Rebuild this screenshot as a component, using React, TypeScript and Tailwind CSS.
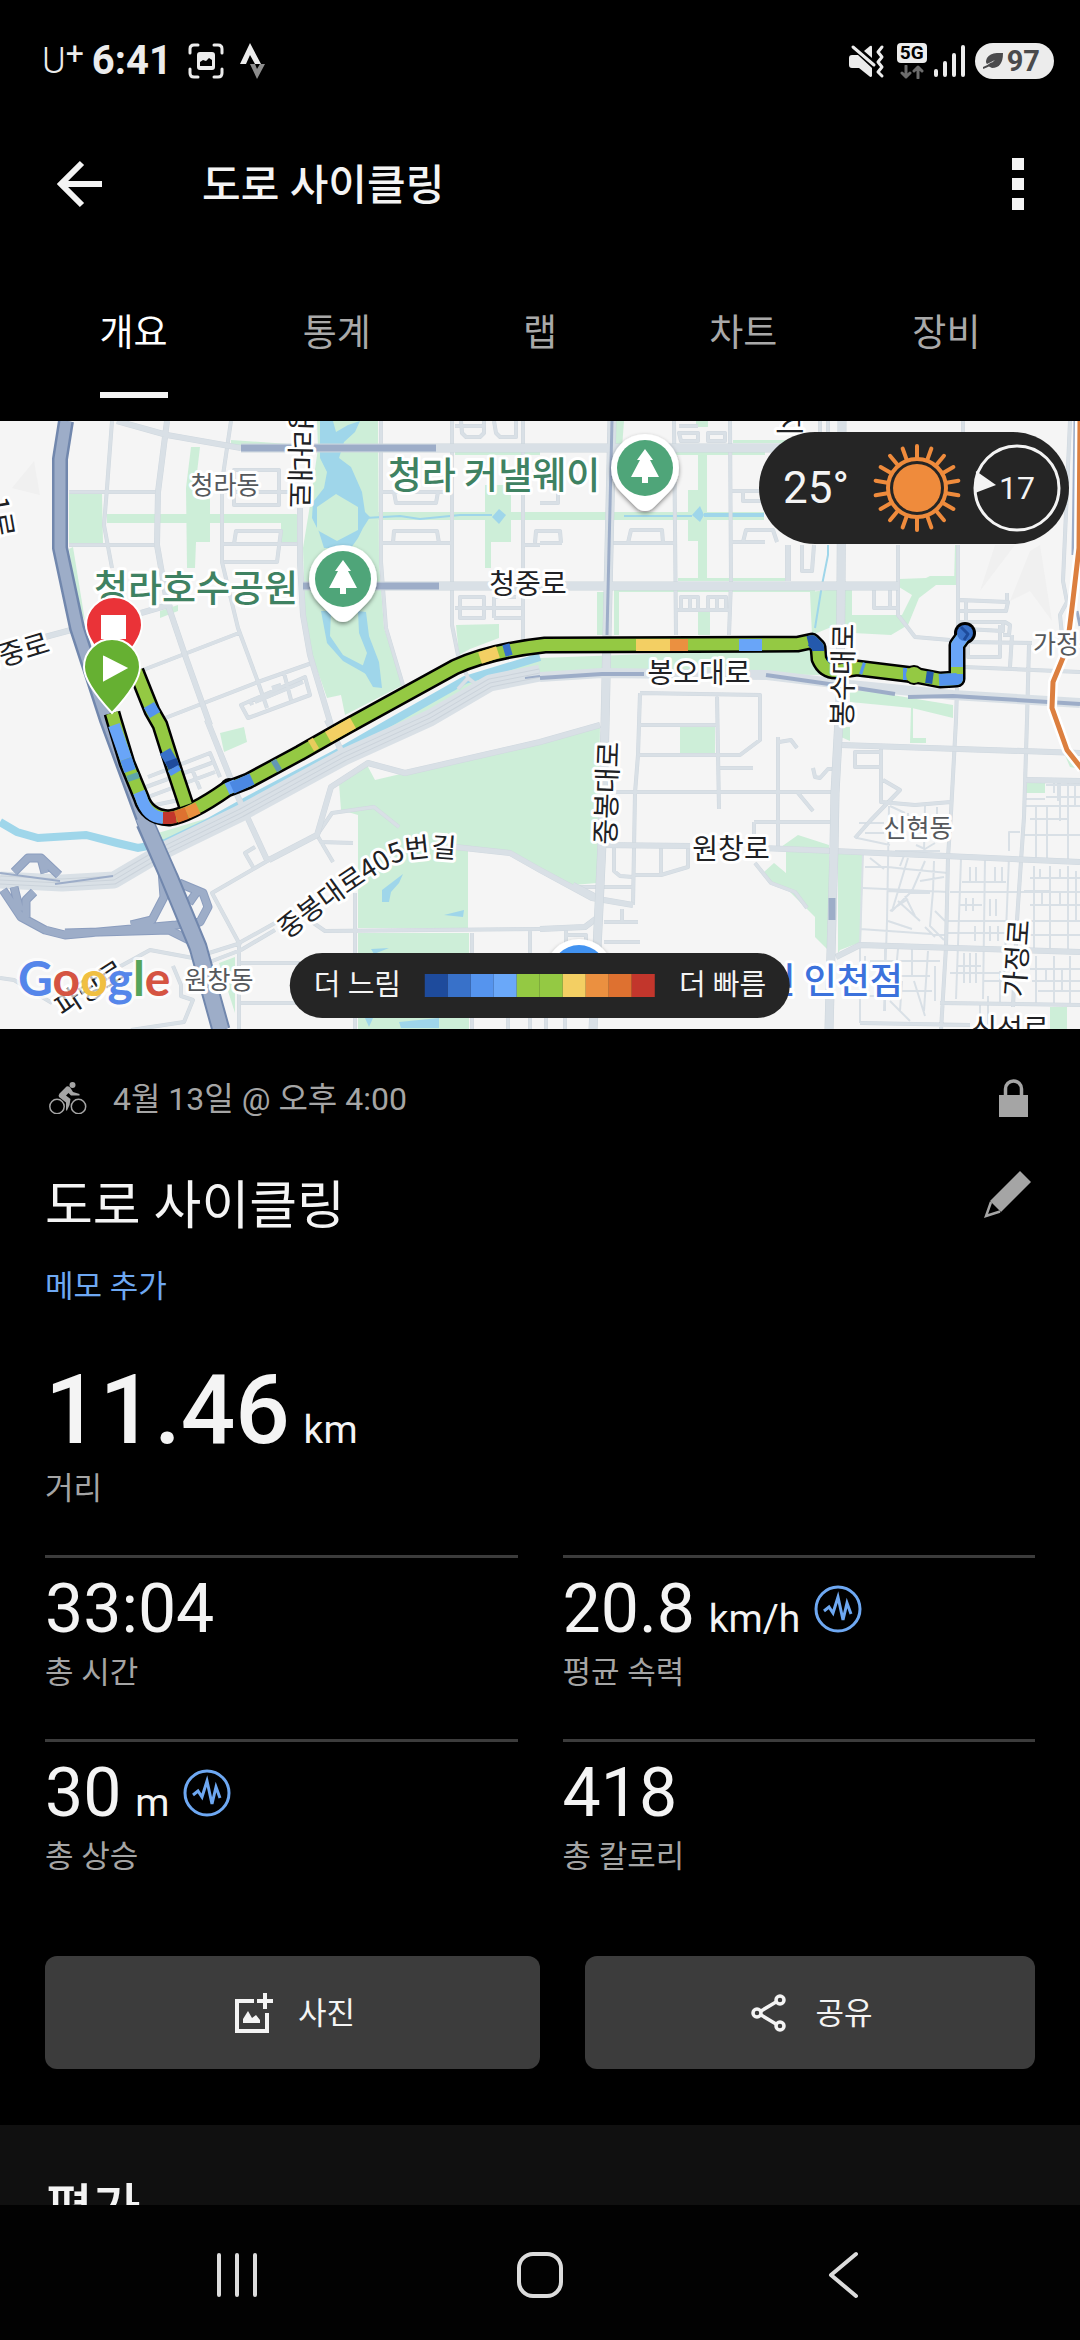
import { useState } from "react";
import type { ReactNode } from "react";

const TABS = ["개요", "통계", "랩", "차트", "장비"];

const LEGEND_COLORS = [
  "bg-[#1e4b9c]",
  "bg-[#3871c9]",
  "bg-[#5594ee]",
  "bg-[#6aa8f9]",
  "bg-[#94c943]",
  "bg-[#94c943]",
  "bg-[#f3cf63]",
  "bg-[#eb9040]",
  "bg-[#de7130]",
  "bg-[#c2362c]",
];

interface StatProps {
  value: string;
  unit?: string;
  label: string;
  hasChart?: boolean;
}

const STATS: StatProps[] = [
  { value: "33:04", label: "총 시간" },
  { value: "20.8", unit: "km/h", label: "평균 속력", hasChart: true },
  { value: "30", unit: "m", label: "총 상승", hasChart: true },
  { value: "418", label: "총 칼로리" },
];

const PARKS = [
  "317,0 378,0 379,141 384,207 403,264 345,294 341,274 327,277 312,234 305,194 303,127 310,84 318,27",
  "191,26 200,26 196,60 210,76 210,121 196,121 195,147 187,147 186,67",
  "107,93 296,93 303,96 303,121 281,121 281,102 107,102",
  "69,72 102,72 103,122 69,122",
  "69,128 73,126 85,200 78,186",
  "370,91 540,91 764,91 764,99 540,99 370,99",
  "485,64 511,64 511,121 491,121 491,147 485,147",
  "698,31 707,31 707,157 698,157 698,120 688,120 688,69 698,69",
  "231,19 288,23 288,26 231,24",
  "455,31 540,31 540,34 455,34",
  "462,261 517,241 540,237 815,227 826,254 540,252 510,259 430,299 241,396 162,429 158,412 248,385",
  "339,362 367,344 375,359 600,306 597,462 573,464 510,431 468,426 468,507 358,507 358,394 341,389",
  "358,512 469,512 469,609 358,609",
  "456,204 499,203 499,217 470,228 459,234",
  "220,312 244,306 247,321 224,331",
  "781,426 798,414 829,424 829,496 815,496 788,469 769,461 764,451 774,442 786,452 786,431",
  "838,432 863,433 861,521 840,529 838,532",
  "815,496 829,496 828,529 815,516",
  "680,306 715,306 715,332 680,332",
  "810,171 852,166 852,194 902,194 912,174 899,166 899,158 926,157 930,155 955,155 955,164 936,164 919,177 908,204 891,214 853,212 829,207 812,214",
  "850,267 953,284 953,297 912,287 850,281",
  "597,171 605,171 605,214 597,214",
  "614,168 815,168 815,171 619,171 619,214 614,214",
  "698,191 710,191 710,214 698,214",
  "616,0 624,0 622,27 616,27",
  "678,157 788,157 788,160 678,160",
  "733,19 795,19 795,22 733,22",
  "614,31 765,31 765,34 614,34",
  "696,0 708,0 708,6 696,6",
  "786,124 789,124 788,157 785,157",
  "955,124 958,124 957,164 954,164",
  "911,287 913,287 913,317 926,317 926,322 910,322",
  "841,306 850,306 850,320 841,316",
  "1050,586 1067,586 1067,608 1050,608",
  "1026,361 1045,361 1045,372 1026,372",
  "1064,332 1072,334 1080,344 1080,348 1070,346",
  "219,542 235,536 235,592",
  "160,190 178,184 178,190 160,197",
  "178,205 186,236 182,232 174,200",
];

const WATER = [
  "320,0 333,0 336,11 348,4 360,0 355,11 344,21 339,37 351,46 362,71 365,91 370,96 363,107 358,117 351,127 324,127 319,111 312,97 313,81 324,67 327,51 320,37",
  "358,190 366,191 369,215 379,241 382,267 373,266 362,247 367,232 359,212",
  "321,190 331,190 330,215 343,234 366,246 366,253 343,240 327,222",
  "492,96 499,88 506,94 499,103",
  "692,94 700,85 704,94 700,101",
  "382,469 403,453 399,462 391,471 389,481 382,481",
  "444,494 464,489 463,496",
  "399,601 439,597 439,607 401,607",
  "371,528 389,527 374,533",
  "365,597 373,597 369,606",
];

const LARGE_ROADS =
  "M241 27H795M303 165H898M612 0L607 214L605 304L602 422L599 486L593 609M842 0L841 167L840 280L835 372L834 427L831 532L829 609";

const MEDIUM_ROADS = [
  "M117 0L167 14L241 27M167 0L158 71L157 124L167 181L186 237L210 304M207 299L238 376L267 439M300 87V141L303 194L310 234L331 304",
  "M45 216L71 209M141 192L172 183M327 299L344 336M269 439L317 414L331 366L368 342L405 352L540 321L600 304",
  "M455 426L510 432L540 449L592 477L633 484M573 464L600 478M600 424L690 425M760 427L834 430L1080 441",
  "M841 324L1080 332M836 536L860 524L1080 531M540 508L585 506L597 497M788 124V160M1026 359L1080 360",
].join("");

const SMALL_ROADS = [
  "M381 0V141L386 207L403 264M452 0V204L458 234L468 257L458 268M468 257L482 268M523 0V222",
  "M112 0L107 67L104 104L112 147M231 0L222 61V141L238 207L258 261L267 287",
  "M69 71H158M69 124H158M222 123H300M222 71H288M234 49H279V84H234ZM234 123L236 110H281L277 141H224",
  "M381 122H452M393 122L394 110H437L439 122M381 71H452M394 71L396 82H436L438 71M523 124H540M535 122L536 110H560L561 122",
  "M461 0L462 12L466 16H480L484 12V0M494 0L496 12L500 16H516V0M455 5H484",
  "M460 176H484V197H460ZM494 176H516M494 197H523M494 176V197M455 187H523",
  "M143 249L239 212M160 299L258 261L312 242M241 284L305 256L310 274L248 297ZM284 252L291 279M255 281L303 261M250 278L252 284M272 267L281 264",
  "M148 356L210 332L220 356M146 366L214 341M148 376L215 351M155 384L179 379M192 348L200 368",
  "M269 439L212 472L239 522V609M317 414L332 392L374 386L399 406M317 414L333 441M320 421L353 422M355 472V609",
  "M312 501L325 510L540 508M239 522L275 502M207 542L241 529L275 509M0 557L14 559L52 582M90 562L150 529L193 537L241 522M131 609L184 601L193 579L181 575V564L173 545",
  "M241 542H300M241 582H300M472 512V609M530 510V609M508 590V609M546 590V609M565 590V609M255 426L245 432L253 446",
  "M674 0L676 214M730 0L731 160L729 214M679 5H698M679 12H698V20H681ZM708 12H725V20H708Z",
  "M540 122H562M609 122H674M628 122L631 109H662L663 122M730 121H765M743 121L746 109H773L777 121M743 70V80H765M730 70H765M540 82H558V70",
  "M681 176H698V189H681ZM690 176V189M708 176H726V189H708ZM717 176V189M676 189H730M802 124V150H812L814 124",
  "M820 0V12M828 0V12M963 0V12M898 124V194L915 216L950 219M958 124V214M874 166H890V187H874ZM874 187H898",
  "M964 221L1032 222M963 246L1080 251M1029 224L1027 299L1024 396L1017 499L1013 586M957 267L956 299L951 392L948 436L946 526L941 609",
  "M960 179L1008 181L1006 190H960M960 201H1005L1010 204L1009 214H1003M966 180V208L1003 210V201M1007 179V172M968 222V236H1000V204M1012 214L1010 246",
  "M1070 0L1063 160L1067 181L1060 194L1062 214M640 272L760 274V319L740 334H638M640 272L638 334L635 372L633 484M717 274L719 388M638 304H717",
  "M616 371H833M574 466H633M604 501H638M604 521H640M622 488V500M778 316V427M778 401H833M754 401V424M754 401H778M614 424V450L620 455L633 456M661 424V454M688 424V446L661 454H633M720 347H753M779 321L791 319L797 327",
  "M755 442L771 462L795 471L807 487M798 372L813 390M813 347L815 356L820 357L828 348L833 348M855 331H881V346H855ZM881 324V381L915 384L951 381M883 359L900 369L870 400L855 417",
  "M860 602L970 604M940 582L1080 584M566 508V524M566 514H586V520",
].join("");

// Residential grid in the south-east corner
const STREETS = [
  "M863 433L860 524V602M889 385L887 500L884 590M908 392V400M925 385L924 430M934 440L933 470L930 505L944 519M937 386V400",
  "M859 402H884M857 417L890 424M865 446H888L906 448L948 452M863 467L948 471M860 508L946 514M865 412H884M908 437L892 490L912 470L925 440",
  "M888 470L930 472M888 500L912 508M898 480L920 500M905 475L915 495M890 490L908 478M920 460L944 456M870 437L884 448M905 432L900 445M935 490L945 500M925 506L935 516",
  "M961 438L958 524L956 578M985 438L983 578M1009 436L1004 560M970 446V462M976 446V462M995 446V462M1002 446V462M962 461H1006M950 471H1080",
  "M960 484H982M966 477V490M973 477V490M948 500H1006M990 478V495M996 478V495M975 505V520M948 512H1016M990 505V520M998 505V520",
  "M957 545H981M964 532V562M970 532V562M976 532V562M950 552H1010M984 560H1010M988 575V604M1000 550V584M980 584V604",
  "M1036 385V440M1058 362V380M1025 385H1080M1030 398H1068M1047 385V440M1060 362V400M1068 362V440M1075 362V384M1046 376H1080M1024 414H1080M1026 378H1045",
  "M1034 445V530M1050 445V530M1068 445V530M1030 457H1080M1030 484H1080M1030 500H1080M1022 514H1080M1040 448V457M1060 448V457M1042 470V484M1060 470V484M1076 450V500M1024 470H1050",
  "M1036 535V584M1054 535V584M1070 535V584M1030 548H1080M1032 560H1080M1038 570H1080M1046 548V560M1062 548V570M1054 362V372M1046 364H1080",
  "M885 528V590M898 528L895 560M912 528V556M928 530L924 590M870 540H940M888 555H930M886 570H932M890 580L910 600M902 560L900 590M914 560L925 595M935 545V580M865 535V552M880 560H870M866 575H884",
  "M1009 430V411H1020M890 385L905 392M895 430H940M916 424L925 428L935 422",
].join("");

const RAMPS =
  "M14 451L28 437H41L59 454M41 437L45 452M3 469L21 496L45 509L65 514L176 504L200 501L208 486L203 472L179 462M14 466L20 490M34 471L26 479V496M162 449L164 476L152 499L131 504M65 512L169 509L193 521M196 472L189 482";

const MOTORWAY = "M66 0L60 38V127L77 207L107 299L145 402L169 456L198 526L221 609";
const TROLLEY =
  "M540 252L490 262L430 297L344 336L241 392L165 429L114 459L62 462L0 459";
const SUBWAY =
  "M1080 0L1079 127L1072 187L1067 227L1053 261L1052 287L1067 329L1082 348";

const ROUTE =
  "M112 292L114 299L127 342L141 376Q147 396 169 397Q190 394 227 368L248 360L300 332L344 307L455 246Q490 230 545 224L798 223L812 220L818 226L819 238Q824 250 836 250L857 247L914 254L940 259L957 258V224L965 213";
const ROUTE_RETURN = "M136 250L152 290L160 304L172 342L186 384";

const SEGMENTS = [
  { color: "#94c943", d: ROUTE_RETURN },
  { color: "#94c943", d: ROUTE },
  { color: "#69a5f8", d: "M114 304L126 338" },
  { color: "#5594ee", d: "M126 338L130 350" },
  { color: "#5fa5a8", d: "M132 353L134 359" },
  { color: "#69a5f8", d: "M139 371L141 376Q147 396 163 397" },
  { color: "#c2362c", d: "M163 397H169L176 396" },
  { color: "#de7130", d: "M176 396L187 392" },
  { color: "#eb9040", d: "M187 392L198 387" },
  { color: "#5594ee", d: "M149 284L155 294" },
  { color: "#3871c9", d: "M165 330L172 342" },
  { color: "#1e4b9c", d: "M171 339L174 347" },
  { color: "#5594ee", d: "M173 347L176 352" },
  { color: "#69a5f8", d: "M227 368L236 364" },
  { color: "#4b88e2", d: "M232 367L252 358" },
  { color: "#6397b4", d: "M274 346L279 343" },
  { color: "#e8cc5c", d: "M311 325L316 322" },
  { color: "#f3cf63", d: "M328 316L353 302" },
  { color: "#f3cf63", d: "M480 237L498 231" },
  { color: "#3871c9", d: "M504 230L511 228" },
  { color: "#f3cf63", d: "M636 224H670" },
  { color: "#eb9040", d: "M670 224H688" },
  { color: "#69a5f8", d: "M739 224H762" },
  { color: "#2459ad", d: "M808 221L812 220L818 226V230" },
  { color: "#5594ee", d: "M861 247L864 248" },
  { color: "#5594ee", d: "M903 253L907 253" },
  { color: "#2459ad", d: "M926 256L933 257" },
  { color: "#5594ee", d: "M939 259L957 258V253" },
  { color: "#69a5f8", d: "M957 246V224L965 213" },
];

interface MapLabelProps {
  x: number;
  y: number;
  size?: number;
  fill?: string;
  weight?: number;
  rotate?: number;
  anchor?: "start" | "middle" | "end";
  children: ReactNode;
}

function MapLabel({
  x,
  y,
  size = 28,
  fill = "#202124",
  weight = 400,
  rotate = 0,
  anchor = "middle",
  children,
}: MapLabelProps) {
  return (
    <text
      transform={`translate(${x} ${y}) rotate(${rotate})`}
      fontSize={size}
      fontWeight={weight}
      fill={fill}
      stroke="#fff"
      strokeWidth={6}
      strokeLinejoin="round"
      paintOrder="stroke"
      textAnchor={anchor}
      dominantBaseline="central"
    >
      {children}
    </text>
  );
}

function ParkPin({ x, y }: { x: number; y: number }) {
  return (
    <g transform={`translate(${x} ${y})`}>
      <path
        d="M0 43Q-5 43 -9 39L-24 24A34 34 0 1 1 24 24L9 39Q5 43 0 43Z"
        fill="#fff"
        filter="url(#pin-shadow)"
      />
      <circle r="28" fill="#4fa579" />
      <path d="M0-19L8-8H5L14 9H3V15H-3V9H-14L-5-8H-8Z" fill="#fff" />
    </g>
  );
}

function RouteMap() {
  return (
    <svg
      viewBox="0 0 1080 608"
      className="block h-auto w-full bg-[#f5f5f5] font-['Noto_Sans_CJK_KR',sans-serif]"
      role="img"
      aria-label="경로 지도"
    >
      <defs>
        <filter id="pin-shadow" x="-30%" y="-30%" width="160%" height="160%">
          <feDropShadow dx="0" dy="2" stdDeviation="2" floodOpacity="0.45" />
        </filter>
        <path id="curved-road" d="M287 519Q350 468 398 441Q425 431 470 440" />
      </defs>

      <path
        d="M34 40L12 67L40 74ZM1040 124L1052 200L1030 170L1010 180L1030 130ZM995 124L980 170L1015 124Z"
        fill="#f0f0f0"
      />
      <g fill="#cdeed8">
        {PARKS.map((points) => (
          <polygon key={points} points={points} />
        ))}
      </g>
      <g fill="#9fd6ea">
        {WATER.map((points) => (
          <polygon key={points} points={points} />
        ))}
      </g>
      <polygon
        points="336,73 358,86 358,109 337,120 317,109 317,86"
        fill="#cdeed8"
      />
      <g fill="none" stroke="#9fd6ea">
        <path d="M365 97L400 95L420 98L460 94H492M624 95H692" strokeWidth="2" />
        <path d="M704 94H764" strokeWidth="4" />
        <path d="M828 124V134L822 164L815 207M841 4V10" strokeWidth="2" />
        <path
          d="M540 236L465 259L396 298L337 332L248 379L207 402L165 422L138 427L117 422L86 414L38 417L17 411L0 401"
          strokeWidth="8"
        />
      </g>

      <g fill="none" stroke="#d9e0e6" strokeLinejoin="round">
        <path d={STREETS} strokeWidth="2" />
        <path d={SMALL_ROADS} stroke="#d0d8df" strokeWidth="4" />
        <path d={SMALL_ROADS} strokeWidth="3" />
        <path d={MEDIUM_ROADS} stroke="#d0d8df" strokeWidth="6" />
        <path d={MEDIUM_ROADS} strokeWidth="5" />
        <path d={LARGE_ROADS} stroke="#ccd5dc" strokeWidth="9" />
        <path d={LARGE_ROADS} strokeWidth="8" />
        <path d={TROLLEY} strokeWidth="17" />
        <path d={TROLLEY} stroke="#cbd3db" strokeWidth="9" />
        <path d={TROLLEY} strokeWidth="7" />
        <path d={TROLLEY} stroke="#cbd3db" strokeWidth="1" />
        <path
          d="M540 256L602 252L767 254L850 264L953 274L1080 282"
          strokeWidth="10"
        />
      </g>

      <g fill="none" stroke="#9dadc8" strokeLinejoin="round">
        <path
          d="M241 27H436M303 165H439M832 477V499"
          strokeWidth="7"
        />
        <path d="M612 0L607 214" strokeWidth="3" />
        <path
          d="M540 257L602 253L644 253M766 254L850 266L895 273M908 276L953 275L1080 283"
          strokeWidth="4"
        />
        <path d="M1075 0L1073 134M1077 190L1080 205" strokeWidth="3" />
        <path d="M525 257L540 255M0 452L60 460M55 463L113 455" strokeWidth="2" />
        <path d={RAMPS} stroke="#8b9dbe" strokeWidth="9" />
        <path d={RAMPS} strokeWidth="7" />
        <path d={MOTORWAY} stroke="#7187ad" strokeWidth="16" />
        <path d={MOTORWAY} strokeWidth="11" />
        <path
          d="M145 402L169 456L198 526L221 609"
          stroke="#7187ad"
          strokeWidth="19"
        />
        <path d="M143 396L169 456L198 526L221 609" strokeWidth="15" />
      </g>

      <g fill="none" strokeLinejoin="round">
        <path d={SUBWAY} stroke="#fff" strokeWidth="10" />
        <path d={SUBWAY} stroke="#dc7f3f" strokeWidth="5" />
      </g>

      <g fill="none" strokeLinejoin="round">
        <path d={ROUTE_RETURN} stroke="#000" strokeWidth="17" />
        <path d={ROUTE} stroke="#000" strokeWidth="17" />
        <circle cx="965" cy="212" r="11" fill="#000" />
        <circle cx="914" cy="254" r="10" fill="#000" />
        <circle cx="229" cy="366" r="9" fill="#000" />
        {SEGMENTS.map(({ color, d }) => (
          <path key={color + d} d={d} stroke={color} strokeWidth="12" />
        ))}
        <circle cx="914" cy="254" r="8" fill="#94c943" />
        <circle cx="965" cy="212" r="8" fill="#3871c9" />
        <path d="M961 206L968 213L964 219" stroke="#1e4b9c" strokeWidth="3" />
      </g>

      <MapLabel x={225} y={62} size={25} fill="#55585c">
        청라동
      </MapLabel>
      <MapLabel x={219} y={557} size={25} fill="#55585c">
        원창동
      </MapLabel>
      <MapLabel x={918} y={405} size={25} fill="#55585c">
        신현동
      </MapLabel>
      <MapLabel x={1033} y={221} size={25} fill="#55585c" anchor="start">
        가정동
      </MapLabel>
      <MapLabel x={494} y={52} size={37} weight={500} fill="#3f8262">
        청라 커낼웨이
      </MapLabel>
      <MapLabel x={196} y={165} size={37} weight={500} fill="#3f8262">
        청라호수공원
      </MapLabel>
      <MapLabel x={528} y={161}>청중로</MapLabel>
      <MapLabel x={699} y={250}>봉오대로</MapLabel>
      <MapLabel x={731} y={426}>원창로</MapLabel>
      <MapLabel x={605} y={372} rotate={-88}>
        중봉대로
      </MapLabel>
      <MapLabel x={841} y={254} rotate={-89}>
        봉수대로
      </MapLabel>
      <MapLabel x={1015} y={537} rotate={-86}>
        가정로
      </MapLabel>
      <MapLabel x={301} y={87} rotate={91} anchor="end">
        청라대로
      </MapLabel>
      <MapLabel x={791} y={2} rotate={90}>
        지
      </MapLabel>
      <MapLabel x={3} y={96} rotate={80}>
        1로
      </MapLabel>
      <MapLabel x={48} y={219} rotate={-17} anchor="end">
        청중로
      </MapLabel>
      <MapLabel x={89} y={566} rotate={-33}>
        파랑로
      </MapLabel>
      <MapLabel x={1010} y={606}>신석로</MapLabel>
      <text
        fontSize={27}
        fill="#202124"
        stroke="#fff"
        strokeWidth={6}
        strokeLinejoin="round"
        paintOrder="stroke"
      >
        <textPath href="#curved-road">중봉대로405번길</textPath>
      </text>
      <MapLabel
        x={903}
        y={557}
        size={36}
        weight={500}
        fill="#3c72dc"
        anchor="end"
      >
        신 인천점
      </MapLabel>

      <ParkPin x={343} y={158} />
      <ParkPin x={645} y={47} />
      <circle cx="579" cy="552" r="34" fill="#fff" filter="url(#pin-shadow)" />
      <circle cx="579" cy="552" r="28" fill="#4192f0" />

      <g stroke="#fff" strokeWidth="2">
        <path
          d="M114 248Q86 220 86 204A28 28 0 0 1 142 204Q142 220 114 248Z"
          fill="#ea3338"
        />
        <rect x="102" y="195" width="23" height="22" fill="#fff" />
        <path
          d="M112 292Q84 262 84 246A28 28 0 0 1 140 246Q140 262 112 292Z"
          fill="#66b032"
        />
        <path d="M104 236L126 247L104 259Z" fill="#fff" />
      </g>

      <text
        x="18"
        y="575"
        fontSize="48"
        className="font-['Lato',sans-serif] font-bold"
        stroke="#fff"
        strokeOpacity="0.7"
        strokeWidth="6"
        strokeLinejoin="round"
        paintOrder="stroke"
      >
        <tspan fill="#5586ea">G</tspan>
        <tspan fill="#d55442">o</tspan>
        <tspan fill="#f0bf42">o</tspan>
        <tspan fill="#5586ea">g</tspan>
        <tspan fill="#56a55b">l</tspan>
        <tspan fill="#d55442">e</tspan>
      </text>
    </svg>
  );
}

function WeatherBadge() {
  const rays = Array.from({ length: 18 }, (_, i) => i * 20);

  return (
    <div className="absolute top-[11px] right-[11px] flex h-28 items-center gap-3 rounded-full bg-[#252525] pr-2 pl-6 text-[#f4f4f4]">
      <span className="mr-3 text-[44px] leading-none">25°</span>
      <svg className="size-[88px]" viewBox="-44 -44 88 88" fill="none">
        <circle r="24" fill="#ef8b3c" />
        <circle r="29" stroke="#ef8b3c" strokeWidth="4" />
        {rays.map((angle) => (
          <path
            key={angle}
            d="M0-30V-42"
            stroke="#ef8b3c"
            strokeWidth="4"
            strokeLinecap="round"
            transform={`rotate(${angle})`}
          />
        ))}
      </svg>
      <div className="relative flex size-[88px] items-center justify-center">
        <svg
          className="absolute inset-0 size-full"
          viewBox="-44 -44 88 88"
          fill="none"
        >
          <circle r="42" stroke="#f4f4f4" strokeWidth="3" />
          <path d="M-41-17L-21-3L-42 5Z" fill="#f4f4f4" />
        </svg>
        <span className="text-[32px] leading-none">17</span>
      </div>
    </div>
  );
}

function SpeedLegend() {
  return (
    <div className="absolute bottom-[11px] left-1/2 flex h-[65px] -translate-x-1/2 items-center gap-6 rounded-full bg-[#252525] px-6 text-[29px] leading-none whitespace-nowrap text-[#f4f4f4]">
      <span>더 느림</span>
      <div className="flex">
        {LEGEND_COLORS.map((color, index) => (
          <span key={index} className={`size-[23px] ${color}`} />
        ))}
      </div>
      <span>더 빠름</span>
    </div>
  );
}

function StatusBar() {
  return (
    <header className="flex h-[122px] shrink-0 items-center justify-between pr-[26px] pl-[42px] text-[#ececec]">
      <div className="flex items-center">
        <span className="flex items-start font-light">
          <span className="text-[36px] leading-9">U</span>
          <span className="text-[32px] leading-5 font-normal">+</span>
        </span>
        <span className="ml-2 text-[40px] leading-none font-bold">6:41</span>
        <svg className="ml-4 size-9" viewBox="0 0 36 36" fill="none">
          <path
            d="M2 10V6Q2 2 6 2H10M26 2H30Q34 2 34 6V10M34 26V30Q34 34 30 34H26M10 34H6Q2 34 2 30V26"
            stroke="currentColor"
            strokeWidth="3"
            strokeLinecap="round"
          />
          <path
            fillRule="evenodd"
            d="M12 9H24Q27 9 27 12V24Q27 27 24 27H12Q9 27 9 24V12Q9 9 12 9ZM12 19V23H24V17L21 15L18 18L15 17Z"
            fill="currentColor"
          />
        </svg>
        <svg className="ml-4 h-9 w-[26px]" viewBox="0 0 26 36">
          <path d="M10 0L21 21H15L10 12L6 21H0Z" fill="currentColor" />
          <path d="M10 21H15L17 26L20 21H25L17 36Z" fill="#8c8c8c" />
        </svg>
      </div>

      <div className="flex items-center">
        <svg className="h-9 w-9" viewBox="0 0 36 36" fill="currentColor">
          <path d="M3 12H9L23 25V33Q22 35 20 33L10 25H3Q0 25 0 22V15Q0 12 3 12Z" />
          <path d="M15 8L21 3Q23 2 23 4V15Z" />
          <path
            d="M4 4L25 22"
            stroke="currentColor"
            strokeWidth="3"
            strokeLinecap="round"
          />
          <path
            d="M33 4L29 9L33 14L29 19L33 24L29 29L33 33"
            fill="none"
            stroke="currentColor"
            strokeWidth="3"
            strokeLinecap="round"
            strokeLinejoin="round"
          />
        </svg>
        <div className="ml-3 flex flex-col items-center gap-0.5">
          <span className="rounded bg-[#ececec] px-[3px] text-[19px] leading-5 font-bold text-black">
            5G
          </span>
          <svg
            className="h-[14px] w-6"
            viewBox="0 0 24 14"
            fill="none"
            stroke="#6c6c6c"
            strokeWidth="3"
            strokeLinecap="round"
            strokeLinejoin="round"
          >
            <path d="M6 1V12M2 8L6 12L10 8M18 13V2M14 6L18 2L22 6" />
          </svg>
        </div>
        <svg
          className="ml-1.5 h-9 w-8"
          viewBox="0 0 32 36"
          stroke="currentColor"
          strokeWidth="4"
          strokeLinecap="round"
        >
          <path d="M3 28V32M12 20V32M21 12V32M30 4V32" />
        </svg>
        <span className="ml-2.5 flex h-9 items-center gap-1 rounded-full bg-[#ececec] pr-3.5 pl-2 text-[29px] leading-none font-bold text-[#4a4a4c]">
          <svg className="h-4 w-5" viewBox="0 0 20 16">
            <path
              d="M20 0Q8-1 4 5Q2 9 4 11L12 7L5 13L9 15Q20 15 20 0Z"
              fill="currentColor"
            />
            <path
              d="M0 15Q4 14 9 10"
              stroke="currentColor"
              strokeWidth="2"
              fill="none"
            />
          </svg>
          97
        </span>
      </div>
    </header>
  );
}

function ChartIcon() {
  return (
    <svg
      className="size-12"
      viewBox="0 0 48 48"
      fill="none"
      stroke="#6ea8f2"
      strokeWidth="3"
    >
      <circle cx="24" cy="24" r="22" />
      <path d="M10 26L15 22L19 28L24 12L29 35L33 18L37 29" />
    </svg>
  );
}

function Stat({ value, unit, label, hasChart }: StatProps) {
  return (
    <div className="border-t-[3px] border-[#3c3c3c] pt-[15px]">
      <div className="flex items-center gap-3.5">
        <p className="text-[68px] leading-[72px]">
          {value}
          {unit && (
            <span className="ml-1 text-[39px] leading-none"> {unit}</span>
          )}
        </p>
        {hasChart && (
          <button type="button" aria-label={`${label} 차트`}>
            <ChartIcon />
          </button>
        )}
      </div>
      <p className="mt-2 text-[31px] leading-10 text-[#a5a5a5]">{label}</p>
    </div>
  );
}

export default function App() {
  const [activeTab, setActiveTab] = useState(TABS[0]);

  return (
    <div className="flex h-screen flex-col overflow-hidden bg-black font-['Roboto','Noto_Sans_CJK_KR',sans-serif] text-[#f4f4f4]">
      <StatusBar />

      <div className="flex h-[124px] shrink-0 items-center px-14">
        <button type="button" aria-label="뒤로">
          <svg
            className="size-12"
            viewBox="0 0 48 48"
            fill="none"
            stroke="currentColor"
            strokeWidth="6"
          >
            <path d="M46 24H6M26 3L5 24L26 45" />
          </svg>
        </button>
        <h1 className="ml-[98px] flex-1 pt-1 text-[42px] leading-[54px] font-medium">
          도로 사이클링
        </h1>
        <button
          type="button"
          aria-label="더보기"
          className="flex flex-col gap-2"
        >
          <span className="size-3 bg-current" />
          <span className="size-3 bg-current" />
          <span className="size-3 bg-current" />
        </button>
      </div>

      <nav className="grid shrink-0 grid-cols-5 px-8 pt-[61px] pb-[23px]">
        {TABS.map((tab) => (
          <button
            key={tab}
            type="button"
            onClick={() => setActiveTab(tab)}
            className={`justify-self-center border-b-[6px] pb-[31px] text-[37px] leading-[54px] ${
              tab === activeTab
                ? "border-[#f4f4f4] text-white"
                : "border-transparent text-[#a9a9a9]"
            }`}
          >
            {tab}
          </button>
        ))}
      </nav>

      <main className="min-h-0 flex-1 overflow-y-auto [scrollbar-width:none]">
        <div className="relative">
          <RouteMap />
          <WeatherBadge />
          <SpeedLegend />
        </div>

        <section className="px-[45px] pt-[45px] pb-14">
          <div className="flex h-12 items-center text-[#a5a5a5]">
            <svg className="ml-1 h-8 w-[38px]" viewBox="0 0 38 32">
              <g fill="none" stroke="currentColor" strokeWidth="1.5">
                <circle cx="8" cy="24.5" r="7.2" />
                <circle cx="29.5" cy="24.5" r="7.2" />
              </g>
              <circle cx="23.5" cy="3" r="3" fill="currentColor" />
              <path
                d="M17.5 4.5Q20 3.5 21.5 6L24 10L30.5 12V13.5H22L19.5 11L17 13.5L21.5 17L20.5 23L18 28.5H17V20.5L10 15Q9 13.5 10.5 11.5Z"
                fill="currentColor"
              />
            </svg>
            <p className="ml-[26px] flex-1 pt-0.5 text-[32px] leading-10">
              4월 13일 @ 오후 4:00
            </p>
            <button type="button" aria-label="공개 설정">
              <svg className="mr-1.5 h-[38px] w-[30px]" viewBox="0 0 30 38">
                <path d="M0 16H29V38H0Z" fill="currentColor" />
                <path
                  d="M6.5 17V10A8 8 0 0 1 22.5 10V17"
                  fill="none"
                  stroke="currentColor"
                  strokeWidth="3.5"
                />
              </svg>
            </button>
          </div>

          <div className="mt-[49px] flex h-[68px] items-end justify-between">
            <h2 className="text-[52px] leading-[64px]">도로 사이클링</h2>
            <button type="button" aria-label="이름 편집" className="self-start">
              <svg
                className="mr-1 size-[47px] text-[#a5a5a5]"
                viewBox="0 0 47 47"
              >
                <path d="M36 0L47 11L17 41L6 30Z" fill="currentColor" />
                <path
                  d="M7 31L2 45L16 40.5"
                  fill="none"
                  stroke="currentColor"
                  strokeWidth="2.5"
                />
              </svg>
            </button>
          </div>

          <a
            href="#memo"
            className="mt-7 block w-fit text-[31px] leading-10 text-[#6ea8f2]"
          >
            메모 추가
          </a>

          <p className="mt-[55px] text-[96px] leading-[96px] font-medium">
            11.46
            <span className="ml-1 text-[39px] leading-none font-normal">
              {" "}
              km
            </span>
          </p>
          <p className="mt-[11px] text-[31px] leading-10 text-[#a5a5a5]">
            거리
          </p>

          <div className="mt-[46px] grid grid-cols-2 gap-x-[45px] gap-y-[46px]">
            {STATS.map((stat) => (
              <Stat key={stat.label} {...stat} />
            ))}
          </div>

          <div className="mt-[79px] grid grid-cols-[11fr_10fr] gap-[45px] text-[31px]">
            <button
              type="button"
              className="flex h-[113px] items-center justify-center gap-6 rounded-xl bg-[#3c3c3c] pl-1"
            >
              <svg
                className="size-10"
                viewBox="0 0 40 40"
                fill="none"
                stroke="currentColor"
                strokeWidth="4"
              >
                <path d="M20 8H3V38H33V20M31 0V16M23 8H39" />
                <path
                  d="M9 30V26L14 18L18 25L22 22L26 27V30Z"
                  fill="currentColor"
                  stroke="none"
                />
              </svg>
              <span className="pt-1">사진</span>
            </button>
            <button
              type="button"
              className="flex h-[113px] items-center justify-center gap-7 rounded-xl bg-[#3c3c3c] pl-1"
            >
              <svg
                className="h-10 w-9"
                viewBox="0 0 36 40"
                fill="none"
                stroke="currentColor"
                strokeWidth="3.5"
              >
                <circle cx="6" cy="20" r="4" />
                <circle cx="29" cy="7" r="4" />
                <circle cx="29" cy="33" r="4" />
                <path d="M10 18L25 9M10 22L25 31" />
              </svg>
              <span className="pt-1">공유</span>
            </button>
          </div>
        </section>

        <section className="bg-[#101010] px-[45px] pt-[53px] pb-12">
          <h2 className="text-[52px] leading-[64px] font-medium">평가</h2>
        </section>
      </main>

      <footer className="flex h-[135px] shrink-0 items-center justify-around bg-[#020202] px-[86px] pt-1 text-[#dcdcdc]">
        <button type="button" aria-label="최근 앱">
          <svg
            className="size-12"
            viewBox="0 0 48 48"
            stroke="currentColor"
            strokeWidth="4"
            strokeLinecap="round"
          >
            <path d="M6 4V44M24 4V44M42 4V44" />
          </svg>
        </button>
        <button type="button" aria-label="홈">
          <svg
            className="size-12"
            viewBox="0 0 48 48"
            fill="none"
            stroke="currentColor"
            strokeWidth="4"
          >
            <rect x="3" y="3" width="42" height="42" rx="14" />
          </svg>
        </button>
        <button type="button" aria-label="뒤로 가기">
          <svg
            className="size-12"
            viewBox="0 0 48 48"
            fill="none"
            stroke="currentColor"
            strokeWidth="4"
            strokeLinecap="round"
            strokeLinejoin="round"
          >
            <path d="M37 3L12 24L37 45" />
          </svg>
        </button>
      </footer>
    </div>
  );
}
